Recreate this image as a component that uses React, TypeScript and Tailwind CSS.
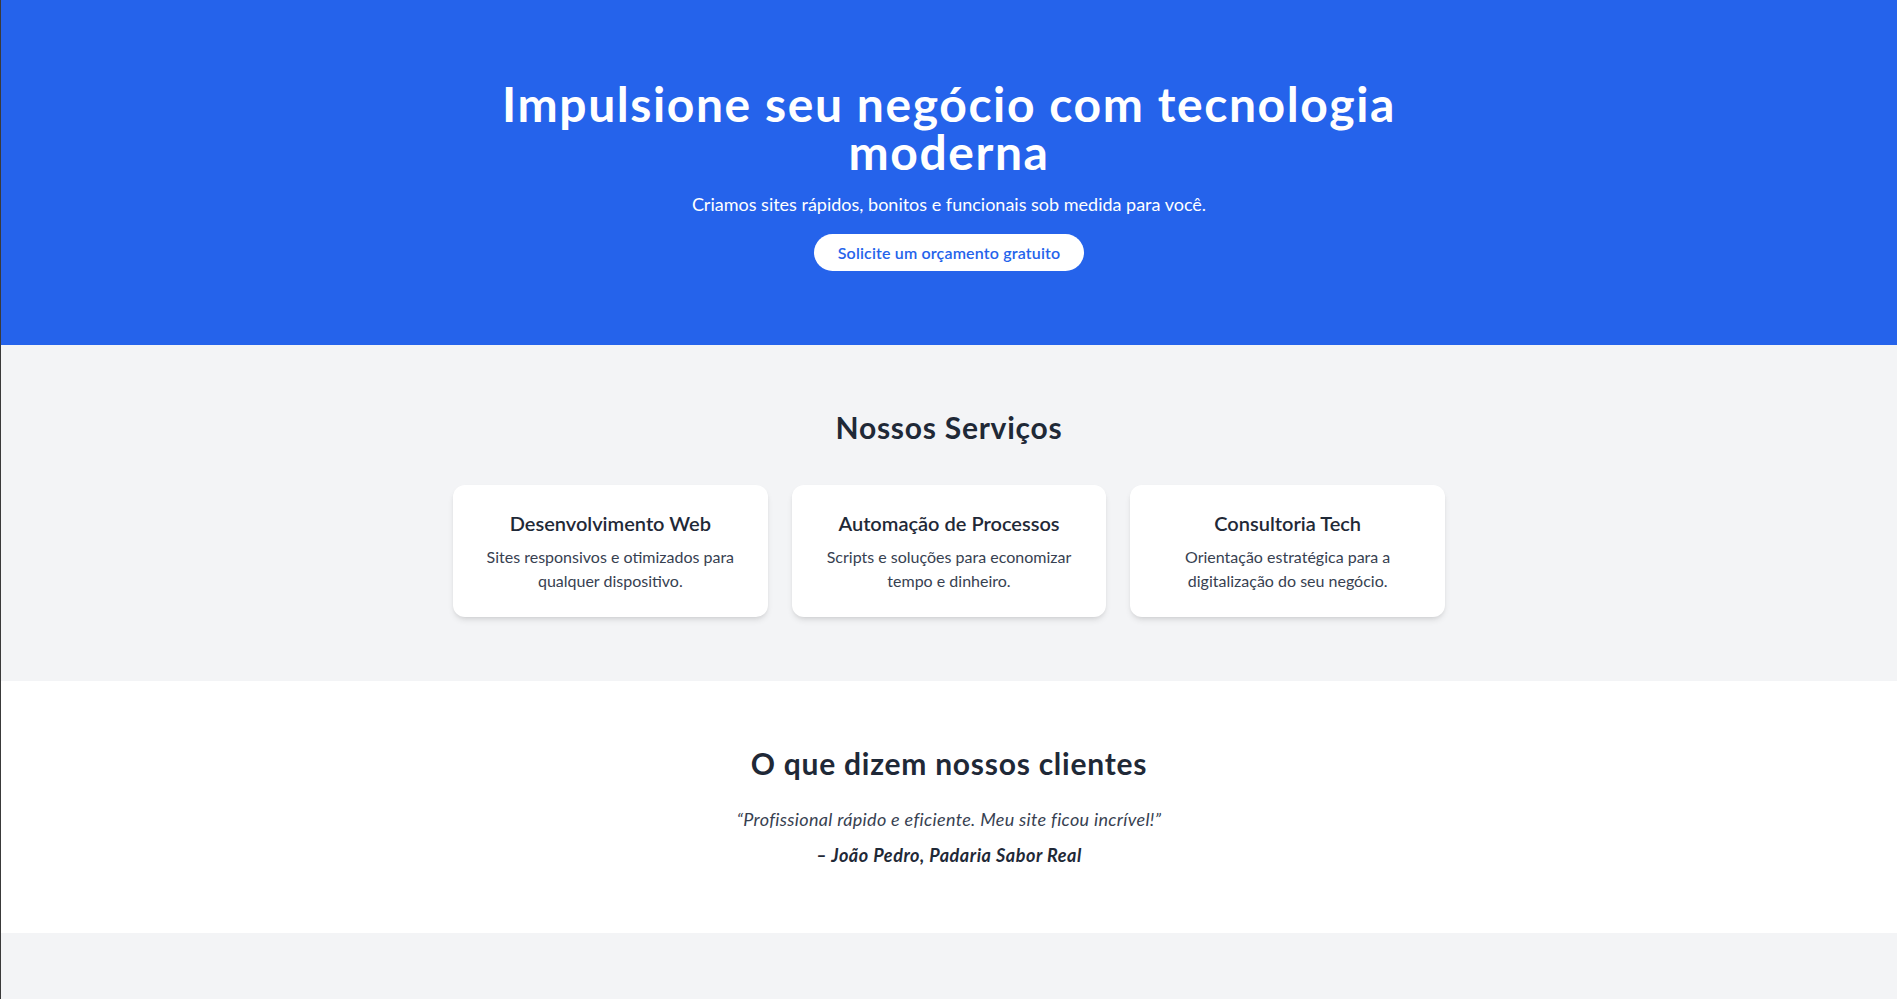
const services = [
  {
    title: "Desenvolvimento Web",
    text: "Sites responsivos e otimizados para qualquer dispositivo.",
  },
  {
    title: "Automação de Processos",
    text: "Scripts e soluções para economizar tempo e dinheiro.",
  },
  {
    title: "Consultoria Tech",
    text: "Orientação estratégica para a digitalização do seu negócio.",
  },
];

export default function App() {
  return (
    <div className="min-h-screen bg-[#f3f4f6] border-l border-[#3a3a3a] font-['Segoe_UI','Lato',sans-serif] text-[#1f2937]">
      <section className="bg-[#2563eb] text-white text-center pt-20 pb-[74px] px-4">
        <h1 className="text-5xl font-bold tracking-[0.033em] max-w-4xl mx-auto mb-3.5">
          Impulsione seu negócio com tecnologia moderna
        </h1>
        <p className="text-lg mb-4">
          Criamos sites rápidos, bonitos e funcionais sob medida para você.
        </p>
        <div className="flex justify-center">
          <a
            href="#"
            className="flex items-center h-[37px] bg-white text-[#2563eb] font-semibold tracking-[0.01em] px-6 rounded-full"
          >
            Solicite um orçamento gratuito
          </a>
        </div>
      </section>

      <section className="py-16 px-4">
        <h2 className="text-3xl font-bold tracking-[0.025em] text-center mb-10">Nossos Serviços</h2>
        <div className="max-w-5xl mx-auto px-4 grid grid-cols-3 gap-6">
          {services.map((s) => (
            <div key={s.title} className="bg-white rounded-xl shadow-md p-6 text-center">
              <h3 className="text-xl font-semibold mb-2">{s.title}</h3>
              <p className="text-[#374151]">{s.text}</p>
            </div>
          ))}
        </div>
      </section>

      <section className="bg-white py-16 px-4 text-center">
        <h2 className="text-3xl font-bold tracking-[0.025em] mb-6">O que dizem nossos clientes</h2>
        <p className="text-lg italic tracking-[0.018em] text-[#374151]">
          “Profissional rápido e eficiente. Meu site ficou incrível!”
        </p>
        <p className="text-lg italic font-bold tracking-[0.03em] mt-2">– João Pedro, Padaria Sabor Real</p>
      </section>
    </div>
  );
}
